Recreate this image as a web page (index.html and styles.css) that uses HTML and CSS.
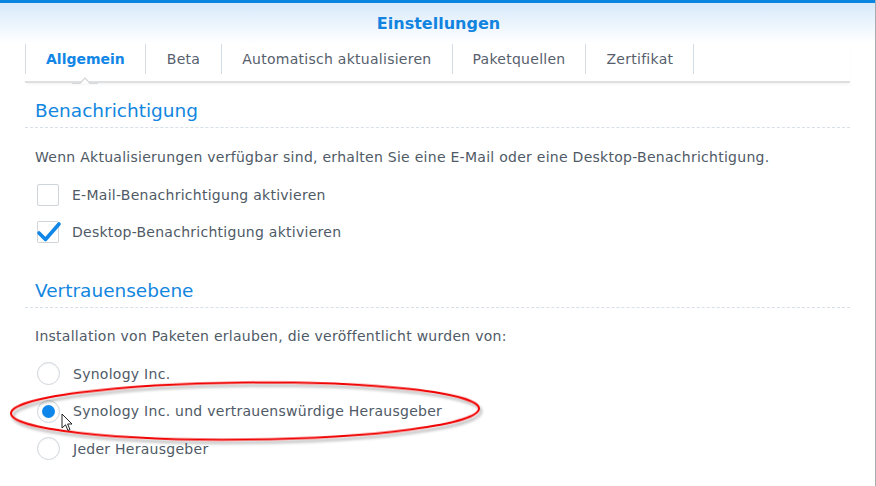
FILE: index.html
```html
<!DOCTYPE html>
<html lang="de">
<head>
<meta charset="utf-8">
<title>Einstellungen</title>
<link rel="stylesheet" href="styles.css">
</head>
<body>
<div class="window">
  <header class="titlebar">
    <h1 class="title">Einstellungen</h1>
  </header>
  <div class="content">
    <nav class="tabs">
      <div class="tab active">Allgemein</div>
      <div class="tab">Beta</div>
      <div class="tab">Automatisch aktualisieren</div>
      <div class="tab">Paketquellen</div>
      <div class="tab">Zertifikat</div>
      <svg class="notch" width="26" height="10" viewBox="0 0 26 10"><path d="M0 9.5 H8 L13 4 L18 9.5 H26" fill="#fff" stroke="#d6d9dc" stroke-width="1.2"/></svg>
    </nav>

    <section class="section first">
      <h2 class="section-title">Benachrichtigung</h2>
      <p class="desc">Wenn Aktualisierungen verfügbar sind, erhalten Sie eine E-Mail oder eine Desktop-Benachrichtigung.</p>
      <label class="row"><span class="checkbox"></span><span class="label">E-Mail-Benachrichtigung aktivieren</span></label>
      <label class="row"><span class="checkbox checked"><svg class="check" width="26" height="22" viewBox="0 0 26 22"><path d="M3 12 L9.5 18.5 L23 3" fill="none" stroke="#1186e6" stroke-width="3.6" stroke-linecap="round" stroke-linejoin="round"/></svg></span><span class="label">Desktop-Benachrichtigung aktivieren</span></label>
    </section>

    <section class="section second">
      <h2 class="section-title">Vertrauensebene</h2>
      <p class="desc">Installation von Paketen erlauben, die veröffentlicht wurden von:</p>
      <label class="row radio-row"><span class="radio"></span><span class="label">Synology Inc.</span></label>
      <label class="row radio-row"><span class="radio selected"></span><span class="label">Synology Inc. und vertrauenswürdige Herausgeber</span></label>
      <label class="row radio-row"><span class="radio"></span><span class="label">Jeder Herausgeber</span></label>
    </section>
  </div>

  <svg class="annotation" width="500" height="80" viewBox="0 0 500 80">
    <defs>
      <filter id="sh" x="-5%" y="-20%" width="110%" height="140%">
        <feGaussianBlur in="SourceAlpha" stdDeviation="1.5"/>
        <feOffset dx="2" dy="3" result="o"/>
        <feComponentTransfer><feFuncA type="linear" slope="0.35"/></feComponentTransfer>
        <feMerge><feMergeNode/><feMergeNode in="SourceGraphic"/></feMerge>
      </filter>
    </defs>
    <ellipse cx="245" cy="33" rx="234" ry="28.5" fill="none" stroke="#f00000" stroke-width="2" filter="url(#sh)" transform="rotate(-0.6 245 33)"/>
  </svg>

  <svg class="cursor" width="14" height="20" viewBox="0 0 14 20">
    <path d="M1 1 L1 15 L4.5 11.8 L7 17.5 L9 16.6 L6.6 11 L11 11 Z" fill="#fff" stroke="#222" stroke-width="1" stroke-linejoin="round"/>
  </svg>
</div>
</body>
</html>
```

FILE: styles.css
```css
* { box-sizing: border-box; }
html, body { margin: 0; padding: 0; background: #fff; }
body {
  font-family: "DejaVu Sans", Verdana, sans-serif;
  font-size: 14px;
  letter-spacing: 0.27px;
  color: #4f5a66;
}
.window {
  position: relative;
  width: 876px;
  height: 486px;
  overflow: hidden;
  border-right: 1px solid #a9adb1;
}
.titlebar {
  height: 44px;
  border-top: 3px solid #0a86e0;
  background: linear-gradient(#d8eafb, #ffffff);
  display: flex;
  justify-content: center;
  align-items: center;
}
.title {
  margin: 0 0 0 2px;
  font-size: 16px;
  letter-spacing: 0;
  font-weight: bold;
  color: #1284e0;
  line-height: 20px;
}
.content {
  padding: 0 25px;
  width: 875px;
}
.tabs {
  position: relative;
  display: flex;
  height: 39px;
  border-bottom: 2px solid #dedfe1;
  box-shadow: 0 2px 3px -1px rgba(0,0,0,0.06);
}
.tab {
  height: 30px;
  line-height: 30px;
  padding: 0 20px;
  border-left: 1px solid #d4dde6;
  color: #56606c;
  white-space: nowrap;
}
.tab:nth-child(2) { padding: 0 21px; }
.tab:last-of-type { border-right: 1px solid #d4dde6; }
.tab.active { font-weight: bold; color: #1186e6; letter-spacing: 0; }
.notch {
  position: absolute;
  left: 47px;
  bottom: -3px;
}
.section-title {
  margin: 0;
  padding: 0 0 4px 10px;
  font-size: 18.5px;
  letter-spacing: 0;
  font-weight: normal;
  line-height: 24px;
  color: #1186e0;
  border-bottom: 1px dashed #d8dfe6;
}
.section.first .section-title { margin-top: 16px; }
.section.second .section-title { margin-top: 29px; }
.desc {
  margin: 20px 0 10px 10px;
  line-height: 18px;
}
.section.second .desc { margin-top: 19px; }
.row {
  display: flex;
  align-items: center;
  height: 37px;
  padding-left: 12px;
}
.radio-row { height: 37.5px; }
.checkbox {
  position: relative;
  width: 22px;
  height: 22px;
  border: 1px solid #cfd5db;
  border-radius: 2px;
  background: #fff;
  flex: none;
}
.check {
  position: absolute;
  left: -2px;
  top: -1px;
}
.radio {
  position: relative;
  width: 23px;
  height: 23px;
  border-radius: 50%;
  border: 1px solid #cfd5db;
  background: #fff;
  box-shadow: inset 0 1px 2px rgba(0,0,0,0.05);
  flex: none;
}
.radio.selected::after {
  content: "";
  position: absolute;
  left: 4px;
  top: 4px;
  width: 13px;
  height: 13px;
  border-radius: 50%;
  background: #0f87ea;
}
.label {
  margin-left: 13px;
  line-height: 18px;
}
.annotation {
  position: absolute;
  left: 0;
  top: 378px;
  pointer-events: none;
}
.cursor {
  position: absolute;
  left: 61px;
  top: 413px;
  pointer-events: none;
}
```
